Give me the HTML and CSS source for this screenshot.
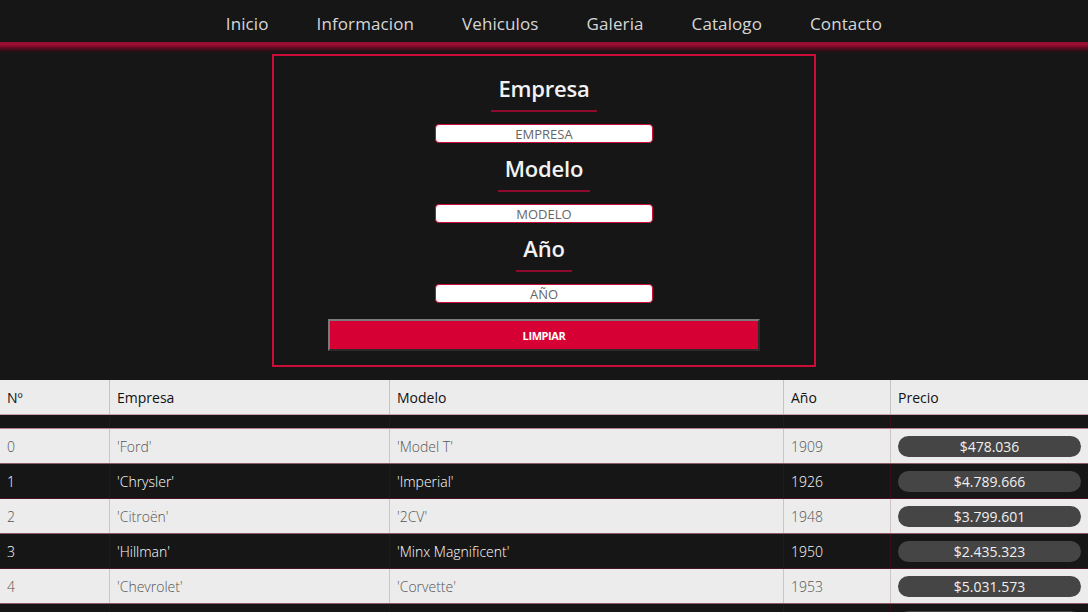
FILE: index.html
```html
<!DOCTYPE html>
<html lang="es">
<head>
<meta charset="utf-8">
<title>Catalogo</title>
<link rel="stylesheet" href="styles.css">
</head>
<body>
<nav class="nav">
  <a href="#">Inicio</a>
  <a href="#">Informacion</a>
  <a href="#">Vehiculos</a>
  <a href="#">Galeria</a>
  <a href="#">Catalogo</a>
  <a href="#">Contacto</a>
</nav>
<div class="glow"></div>
<form class="filter">
  <div class="field">
    <h2 class="label">Empresa</h2>
    <input class="input" type="text" placeholder="EMPRESA">
  </div>
  <div class="field">
    <h2 class="label">Modelo</h2>
    <input class="input" type="text" placeholder="MODELO">
  </div>
  <div class="field">
    <h2 class="label">Año</h2>
    <input class="input" type="text" placeholder="AÑO">
  </div>
  <button class="clear" type="button">LIMPIAR</button>
</form>
<table class="table">
  <thead>
    <tr class="head">
      <th class="c-n">Nº</th>
      <th class="c-e">Empresa</th>
      <th class="c-m">Modelo</th>
      <th class="c-a">Año</th>
      <th class="c-p">Precio</th>
    </tr>
  </thead>
  <tbody>
    <tr class="spacer"><td></td><td></td><td></td><td></td><td></td></tr>
    <tr class="light"><td>0</td><td>'Ford'</td><td>'Model T'</td><td>1909</td><td><span class="price">$478.036</span></td></tr>
    <tr class="dark"><td>1</td><td>'Chrysler'</td><td>'Imperial'</td><td>1926</td><td><span class="price">$4.789.666</span></td></tr>
    <tr class="light"><td>2</td><td>'Citroën'</td><td>'2CV'</td><td>1948</td><td><span class="price">$3.799.601</span></td></tr>
    <tr class="dark"><td>3</td><td>'Hillman'</td><td>'Minx Magnificent'</td><td>1950</td><td><span class="price">$2.435.323</span></td></tr>
    <tr class="light"><td>4</td><td>'Chevrolet'</td><td>'Corvette'</td><td>1953</td><td><span class="price">$5.031.573</span></td></tr>
    <tr class="dark"><td>5</td><td>'Jaguar'</td><td>'E-Type'</td><td>1961</td><td><span class="price">$3.102.455</span></td></tr>
  </tbody>
</table>
</body>
</html>
```
FILE: styles.css
```css
html, body {
  margin: 0;
  padding: 0;
  background: #161616;
  font-family: "Open Sans", "DejaVu Sans", sans-serif;
  overflow: hidden;
}

.nav {
  height: 42px;
  box-sizing: border-box;
  padding: 4px 0 0 20px;
  display: flex;
  justify-content: center;
  align-items: center;
  gap: 48px;
  background: #161616;
}

.nav a {
  color: #d6d6d6;
  text-decoration: none;
  font-size: 17px;
  letter-spacing: 0.1px;
}

.glow {
  height: 11px;
  background: linear-gradient(#8e0c2e 0%, #a20f34 20%, #6a0a22 50%, #2a0f16 80%, #161616 100%);
}

.filter {
  width: 540px;
  margin: 1px auto 0;
  border: 2px solid #cc0d3a;
  display: flex;
  flex-direction: column;
  align-items: center;
  padding: 17px 0 14px;
}

.field {
  display: flex;
  flex-direction: column;
  align-items: center;
  margin-bottom: 10px;
}

.label {
  margin: 0;
  padding: 0 7px 7px;
  font-size: 22px;
  line-height: 30px;
  font-weight: 600;
  letter-spacing: -0.2px;
  color: #f2f2f2;
  border-bottom: 2px solid #8e0b2d;
}

.input {
  box-sizing: border-box;
  width: 218px;
  height: 19px;
  margin-top: 12px;
  border: 1px solid #cc0d3a;
  border-radius: 4px;
  background: #fff;
  text-align: center;
  font-family: "Open Sans", sans-serif;
  font-size: 13px;
  padding: 0;
  color: #555;
}

.input::placeholder {
  color: #666;
}

.clear {
  box-sizing: border-box;
  width: 432px;
  height: 32px;
  margin-top: 6px;
  background: #d60034;
  color: #fff;
  font-family: "Open Sans", sans-serif;
  font-weight: 700;
  font-size: 11px;
  letter-spacing: -0.4px;
  border: 2px solid;
  border-color: #7a7a7a #2c2c2c #2c2c2c #7a7a7a;
}

.table {
  width: 100%;
  margin-top: 13px;
  border-collapse: collapse;
  font-size: 14px;
}

.table th {
  background: #ececec;
  color: #111;
  font-weight: 500;
  text-align: left;
  height: 34px;
  padding: 0 7px;
  border-left: 1px solid #c4c4c4;
  border-bottom: 1px solid #c9a0aa;
}

.table th:first-child,
.table td:first-child {
  border-left: none;
}

.c-n { width: 95px; }
.c-e { width: 265px; }
.c-m { width: 379px; }
.c-a { width: 92px; }

.table td {
  padding: 0 7px;
  height: 34px;
}

.spacer td {
  height: 13px;
  padding: 0;
  background: #161616;
  border-left: 1px solid #3a0d18;
  border-bottom: 1px solid #b08090;
}

.light td {
  background: #ececec;
  color: #555;
  font-weight: 300;
  border-left: 1px solid #cdc4c6;
  border-bottom: 1px solid #8e5a66;
}

.dark td {
  background: #161616;
  color: #fff;
  font-weight: 300;
  border-left: 1px solid #3a0d18;
  border-bottom: 1px solid #4a1522;
}

.price {
  display: block;
  height: 21px;
  line-height: 21px;
  border-radius: 11px;
  background: #454545;
  color: #f0f0f0;
  text-align: center;
  font-weight: 400;
}
```
